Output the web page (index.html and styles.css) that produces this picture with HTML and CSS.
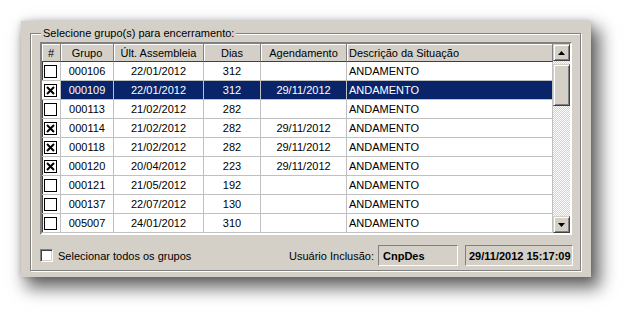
FILE: index.html
```html
<!DOCTYPE html>
<html lang="pt">
<head>
    <meta charset="UTF-8">
    <title>Encerramento de grupos</title>
    <link rel="stylesheet" href="styles.css">
</head>
<body>
    <div class="window">
        <fieldset class="group">
            <legend>Selecione grupo(s) para encerramento:</legend>

            <div class="grid">
                <div class="rows">
                    <div class="row head">
                        <div class="cell c">#</div>
                        <div class="cell c">Grupo</div>
                        <div class="cell c">Últ. Assembleia</div>
                        <div class="cell c">Dias</div>
                        <div class="cell c">Agendamento</div>
                        <div class="cell">Descrição da Situação</div>
                    </div>
                    <div class="row">
                        <div class="cell"><span class="box"></span></div>
                        <div class="cell c">000106</div>
                        <div class="cell c">22/01/2012</div>
                        <div class="cell c">312</div>
                        <div class="cell c"></div>
                        <div class="cell">ANDAMENTO</div>
                    </div>
                    <div class="row selected">
                        <div class="cell"><span class="box checked"><svg width="11" height="11" viewBox="0 0 11 11"><path d="M2 2L9 9M9 2L2 9" stroke="#000" stroke-width="2"/></svg></span></div>
                        <div class="cell c">000109</div>
                        <div class="cell c">22/01/2012</div>
                        <div class="cell c">312</div>
                        <div class="cell c">29/11/2012</div>
                        <div class="cell">ANDAMENTO</div>
                    </div>
                    <div class="row">
                        <div class="cell"><span class="box"></span></div>
                        <div class="cell c">000113</div>
                        <div class="cell c">21/02/2012</div>
                        <div class="cell c">282</div>
                        <div class="cell c"></div>
                        <div class="cell">ANDAMENTO</div>
                    </div>
                    <div class="row">
                        <div class="cell"><span class="box checked"><svg width="11" height="11" viewBox="0 0 11 11"><path d="M2 2L9 9M9 2L2 9" stroke="#000" stroke-width="2"/></svg></span></div>
                        <div class="cell c">000114</div>
                        <div class="cell c">21/02/2012</div>
                        <div class="cell c">282</div>
                        <div class="cell c">29/11/2012</div>
                        <div class="cell">ANDAMENTO</div>
                    </div>
                    <div class="row">
                        <div class="cell"><span class="box checked"><svg width="11" height="11" viewBox="0 0 11 11"><path d="M2 2L9 9M9 2L2 9" stroke="#000" stroke-width="2"/></svg></span></div>
                        <div class="cell c">000118</div>
                        <div class="cell c">21/02/2012</div>
                        <div class="cell c">282</div>
                        <div class="cell c">29/11/2012</div>
                        <div class="cell">ANDAMENTO</div>
                    </div>
                    <div class="row">
                        <div class="cell"><span class="box checked"><svg width="11" height="11" viewBox="0 0 11 11"><path d="M2 2L9 9M9 2L2 9" stroke="#000" stroke-width="2"/></svg></span></div>
                        <div class="cell c">000120</div>
                        <div class="cell c">20/04/2012</div>
                        <div class="cell c">223</div>
                        <div class="cell c">29/11/2012</div>
                        <div class="cell">ANDAMENTO</div>
                    </div>
                    <div class="row">
                        <div class="cell"><span class="box"></span></div>
                        <div class="cell c">000121</div>
                        <div class="cell c">21/05/2012</div>
                        <div class="cell c">192</div>
                        <div class="cell c"></div>
                        <div class="cell">ANDAMENTO</div>
                    </div>
                    <div class="row">
                        <div class="cell"><span class="box"></span></div>
                        <div class="cell c">000137</div>
                        <div class="cell c">22/07/2012</div>
                        <div class="cell c">130</div>
                        <div class="cell c"></div>
                        <div class="cell">ANDAMENTO</div>
                    </div>
                    <div class="row">
                        <div class="cell"><span class="box"></span></div>
                        <div class="cell c">005007</div>
                        <div class="cell c">24/01/2012</div>
                        <div class="cell c">310</div>
                        <div class="cell c"></div>
                        <div class="cell">ANDAMENTO</div>
                    </div>
                </div>

                <div class="scrollbar">
                    <div class="sb-btn"><svg width="7" height="4" viewBox="0 0 7 4"><polygon points="3.5,0 7,4 0,4" fill="#000"/></svg></div>
                    <div class="sb-track"><div class="sb-thumb"></div></div>
                    <div class="sb-btn"><svg width="7" height="4" viewBox="0 0 7 4"><polygon points="0,0 7,0 3.5,4" fill="#000"/></svg></div>
                </div>
            </div>

            <div class="footer">
                <label class="select-all"><span class="box3d"></span>Selecionar todos os grupos</label>
                <span class="caption">Usuário Inclusão:</span>
                <span class="field user">CnpDes</span>
                <span class="field stamp">29/11/2012 15:17:09</span>
            </div>
        </fieldset>
    </div>
</body>
</html>
```

FILE: styles.css
```css
* { box-sizing: border-box; }
html, body { min-height: 320px; }
body { margin: 0; padding: 21px 0 0 21px; background: #fff; font-family: "Liberation Sans", Arial, sans-serif; font-size: 11px; color: #000; }

.window { width: 570px; height: 256px; padding: 6px 10px 0 9px; background: #d4d0c8; box-shadow: 0 0 6px rgba(0,0,0,0.18), 7px 9px 16px 2px rgba(0,0,0,0.6); }

.group { margin: 0; min-width: 0; padding: 2px 8px 4px 9px; border: 1px solid #808080; box-shadow: 1px 1px 0 #fff, inset 1px 1px 0 #fff; }
.group legend { margin-left: 1px; padding: 0 2px; line-height: 13px; background: #d4d0c8; }

.grid { display: flex; height: 193px; border: 2px solid; border-color: #808080 #fff #fff #808080; background: #fff; box-shadow: inset 1px 1px 0 #404040; }
.rows { width: 511px; }
.row { display: grid; grid-template-columns: 19px 53px 90px 57px 86px 206px; height: 19px; }
.cell { display: flex; align-items: center; padding: 0 2px; border-right: 1px solid #c0c0c0; border-bottom: 1px solid #c0c0c0; white-space: nowrap; overflow: hidden; }
.cell.c { justify-content: center; }

.head { height: 18px; }
.head .cell { background: #d4d0c8; border-color: #404040; border-right-color: #808080; box-shadow: inset 1px 1px 0 #fff; }

.selected .cell { background: #0a246a; color: #fff; }
.selected .cell:first-child { background: #fff; }

.box { display: block; width: 13px; height: 13px; border: 1px solid #000; background: #fff; }
.box svg { display: block; }

.scrollbar { width: 17px; display: flex; flex-direction: column; }
.sb-btn { height: 17px; display: flex; align-items: center; justify-content: center; background: #d4d0c8; border: 1px solid; border-color: #d4d0c8 #404040 #404040 #d4d0c8; box-shadow: inset 1px 1px 0 #fff, inset -1px -1px 0 #808080; }
.sb-track { flex: 1; padding-top: 3px; background: repeating-conic-gradient(#d4d0c8 0 25%, #fff 0 50%) 0 0 / 2px 2px; }
.sb-thumb { height: 42px; background: #d4d0c8; border: 1px solid; border-color: #d4d0c8 #404040 #404040 #d4d0c8; box-shadow: inset 1px 1px 0 #fff, inset -1px -1px 0 #808080; }

.footer { display: flex; align-items: center; height: 21px; margin: 10px -1px 0 0; }
.select-all { display: flex; align-items: center; flex: 1; }
.box3d { width: 13px; height: 13px; margin-right: 5px; background: #fff; border: 1px solid; border-color: #808080 #fff #fff #808080; box-shadow: inset 1px 1px 0 #404040, inset -1px -1px 0 #d4d0c8; }
.caption { margin-right: 4px; }
.field { height: 21px; display: flex; align-items: center; padding-left: 4px; font-weight: bold; border: 1px solid; border-color: #808080 #fff #fff #808080; }
.user { width: 80px; margin-right: 7px; }
.stamp { width: 108px; padding-left: 3px; }
```
